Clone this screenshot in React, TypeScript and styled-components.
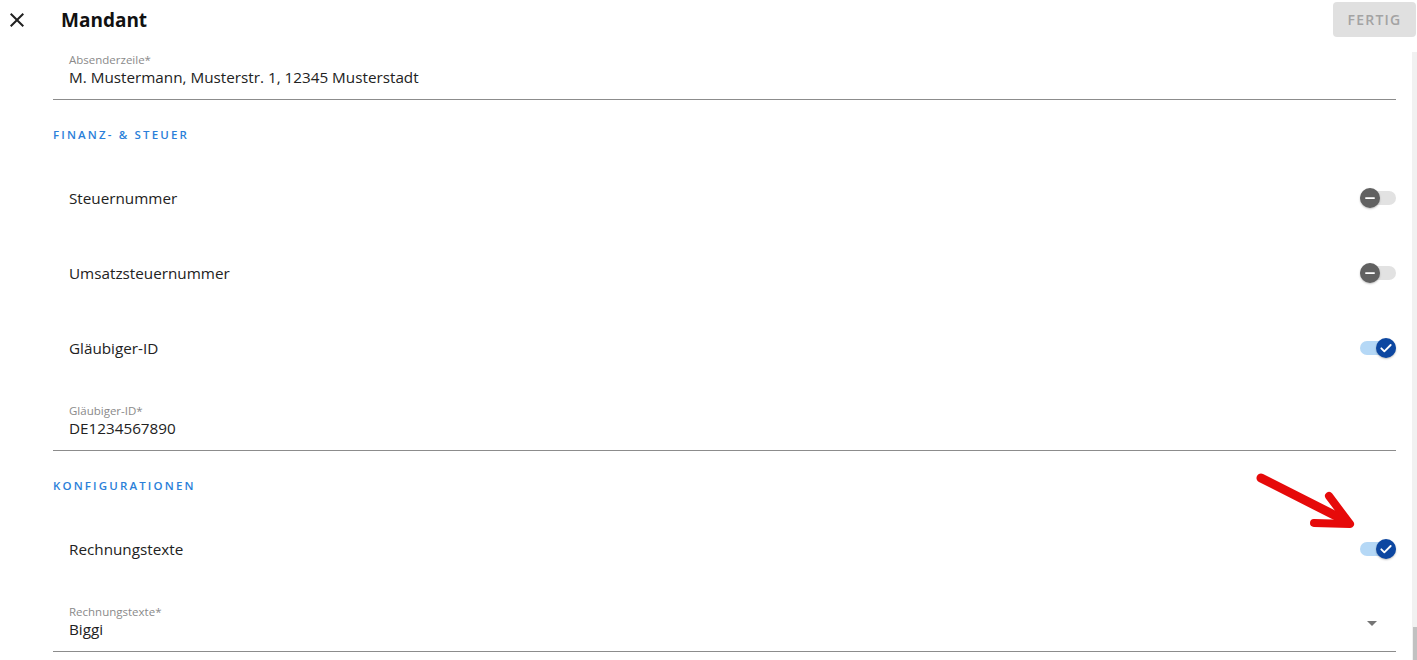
import React from "react";
import styled, { createGlobalStyle } from "styled-components";

const Global = createGlobalStyle`
  html, body { margin: 0; padding: 0; background: #fff; }
  body { font-family: "Open Sans", "Noto Sans", Arial, sans-serif; color: #212121; }
  * { box-sizing: border-box; }
`;

const Page = styled.div`
  position: relative;
  width: 1417px;
  height: 660px;
  overflow: hidden;
  display: flex;
  flex-direction: column;
  background: #fff;
`;

const Header = styled.header`
  height: 39px;
  margin-bottom: 6px;
  display: flex;
  align-items: center;
  padding: 0 1px 0 5px;
  flex-shrink: 0;
`;

const CloseButton = styled.button`
  width: 24px;
  height: 24px;
  padding: 0;
  border: 0;
  background: none;
  display: flex;
  align-items: center;
  justify-content: center;
  color: #212121;
  cursor: pointer;
`;

const Title = styled.h1`
  margin: 0 0 0 32px;
  font-size: 19px;
  font-weight: 700;
  color: #111;
  flex: 1;
  line-height: 24px;
`;

const DoneButton = styled.button`
  width: 83px;
  height: 35px;
  border: 0;
  border-radius: 4px;
  background: #e0e0e0;
  color: #a3a3a3;
  font-family: inherit;
  font-size: 14px;
  font-weight: 600;
  letter-spacing: 1.2px;
`;

const Body = styled.div`
  flex: 1;
  display: flex;
  min-height: 0;
`;

const Content = styled.main`
  flex: 1;
  padding: 0 16px 0 53px;
`;

const ScrollTrack = styled.div`
  width: 5px;
  margin-top: 7px;
  background: #f1f1f1;
  display: flex;
  flex-direction: column;
  justify-content: flex-end;
`;

const ScrollThumb = styled.div`
  height: 33px;
  margin-left: 1px;
  background: #c1c1c1;
`;

const Field = styled.div<{ $gap?: number }>`
  margin-top: ${(p) => p.$gap ?? 0}px;
  padding: 8px 16px 10px;
  border-bottom: 1px solid #8c8c8c;
  display: flex;
  align-items: center;
`;

const FieldBody = styled.div`
  flex: 1;
  display: flex;
  flex-direction: column;
`;

const FieldLabel = styled.label`
  font-size: 11.5px;
  line-height: 14px;
  color: #8a8a8a;
`;

const FieldValue = styled.div`
  margin-top: -2px;
  font-size: 15.25px;
  line-height: 24px;
  color: #222;
`;

const DropArrow = styled.span`
  width: 0;
  height: 0;
  margin-right: 3px;
  border-left: 5px solid transparent;
  border-right: 5px solid transparent;
  border-top: 5px solid #757575;
`;

const SectionTitle = styled.h2`
  margin: 0;
  padding: 27px 0 17px;
  font-size: 11.5px;
  line-height: 16px;
  font-weight: 600;
  letter-spacing: 2.15px;
  color: #2b7fd9;
`;

const Row = styled.div`
  height: 75px;
  display: flex;
  align-items: center;
  justify-content: space-between;
  padding-left: 16px;
`;

const RowLabel = styled.span`
  font-size: 15.25px;
  color: #222;
`;

const SwitchTrack = styled.div<{ $on: boolean }>`
  position: relative;
  width: 36px;
  height: 14px;
  border-radius: 7px;
  background: ${(p) => (p.$on ? "#b5d8f6" : "#e2e2e2")};
`;

const SwitchThumb = styled.div<{ $on: boolean }>`
  position: absolute;
  top: -3px;
  ${(p) => (p.$on ? "right: 0;" : "left: 0;")}
  width: 20px;
  height: 20px;
  border-radius: 50%;
  background: ${(p) => (p.$on ? "#0d47a1" : "#616161")};
  box-shadow: 0 1px 2px rgba(0, 0, 0, 0.25);
  display: flex;
  align-items: center;
  justify-content: center;
`;

const Annotation = styled.svg`
  position: absolute;
  left: 1250px;
  top: 465px;
  pointer-events: none;
`;

function Toggle({ on }: { on: boolean }) {
  return (
    <SwitchTrack $on={on}>
      <SwitchThumb $on={on}>
        {on ? (
          <svg width="16" height="16" viewBox="0 0 24 24">
            <path d="M5 12.5l4.5 4.5L19 7.5" fill="none" stroke="#fff" strokeWidth="2.8" strokeLinecap="round" strokeLinejoin="round" />
          </svg>
        ) : (
          <svg width="14" height="14" viewBox="0 0 24 24">
            <path d="M5 12h14" stroke="#fff" strokeWidth="3" strokeLinecap="round" />
          </svg>
        )}
      </SwitchThumb>
    </SwitchTrack>
  );
}

export default function App() {
  return (
    <Page>
      <Global />
      <Header>
        <CloseButton aria-label="Schließen">
          <svg width="24" height="24" viewBox="0 0 24 24">
            <path d="M19 6.41L17.59 5 12 10.59 6.41 5 5 6.41 10.59 12 5 17.59 6.41 19 12 13.41 17.59 19 19 17.59 13.41 12z" fill="#212121" />
          </svg>
        </CloseButton>
        <Title>Mandant</Title>
        <DoneButton disabled>FERTIG</DoneButton>
      </Header>
      <Body>
        <Content>
          <Field>
            <FieldBody>
              <FieldLabel>Absenderzeile*</FieldLabel>
              <FieldValue>M. Mustermann, Musterstr. 1, 12345 Musterstadt</FieldValue>
            </FieldBody>
          </Field>

          <SectionTitle>FINANZ- &amp; STEUER</SectionTitle>
          <Row>
            <RowLabel>Steuernummer</RowLabel>
            <Toggle on={false} />
          </Row>
          <Row>
            <RowLabel>Umsatzsteuernummer</RowLabel>
            <Toggle on={false} />
          </Row>
          <Row>
            <RowLabel>Gläubiger-ID</RowLabel>
            <Toggle on />
          </Row>
          <Field $gap={11}>
            <FieldBody>
              <FieldLabel>Gläubiger-ID*</FieldLabel>
              <FieldValue>DE1234567890</FieldValue>
            </FieldBody>
          </Field>

          <SectionTitle>KONFIGURATIONEN</SectionTitle>
          <Row>
            <RowLabel>Rechnungstexte</RowLabel>
            <Toggle on />
          </Row>
          <Field $gap={11}>
            <FieldBody>
              <FieldLabel>Rechnungstexte*</FieldLabel>
              <FieldValue>Biggi</FieldValue>
            </FieldBody>
            <DropArrow />
          </Field>
        </Content>
        <ScrollTrack>
          <ScrollThumb />
        </ScrollTrack>
      </Body>
      <Annotation width="120" height="70" viewBox="0 0 120 70">
        <path d="M11 13 L96 56" stroke="#e60a0a" strokeWidth="9" strokeLinecap="round" />
        <path d="M79 31 L100 59 L64 58" fill="none" stroke="#e60a0a" strokeWidth="8" strokeLinecap="round" strokeLinejoin="round" />
      </Annotation>
    </Page>
  );
}
